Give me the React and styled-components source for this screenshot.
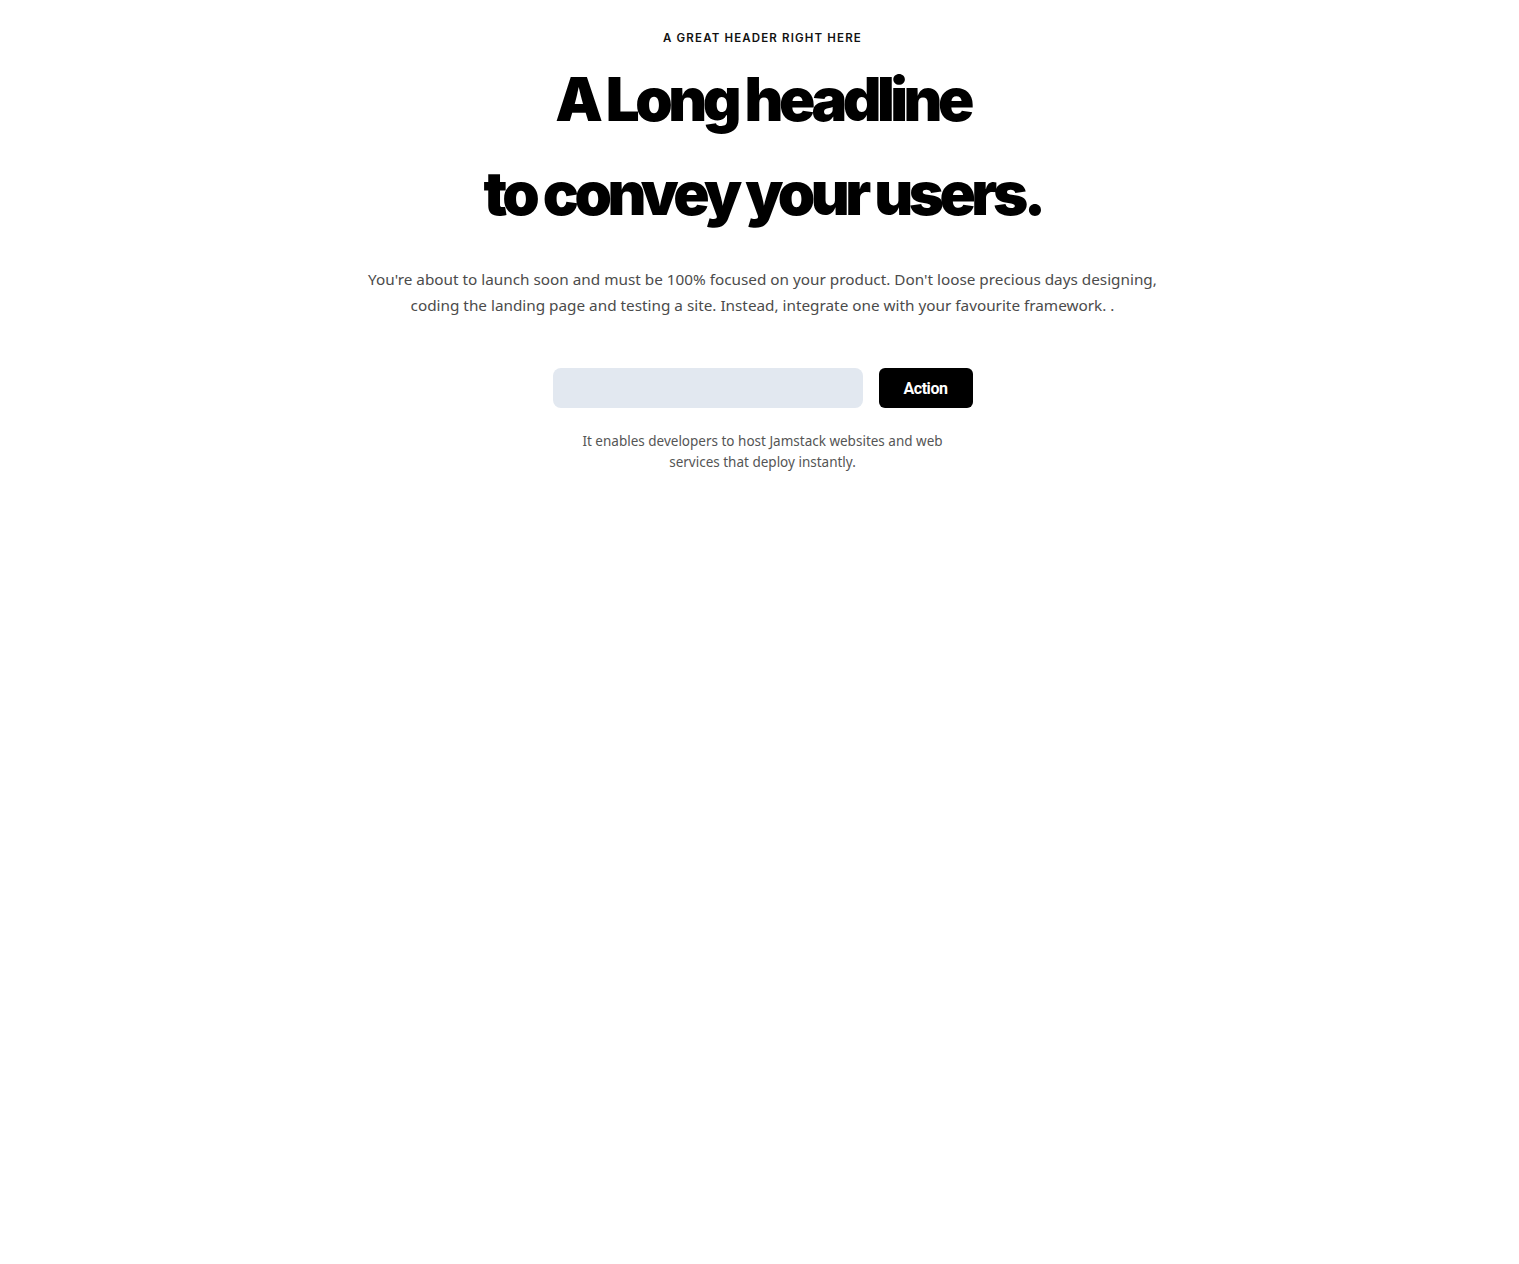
import React from 'react';
import styled, { createGlobalStyle } from 'styled-components';

const GlobalStyle = createGlobalStyle`
  * { box-sizing: border-box; }
  body {
    margin: 0;
    background: #ffffff;
    font-family: "Noto Sans", "Open Sans", sans-serif;
  }
`;

const Page = styled.section`
  display: flex;
  flex-direction: column;
  align-items: center;
  padding: 30px 16px 0 22px;
  text-align: center;
`;

const Eyebrow = styled.p`
  margin: 0;
  font-family: Inter, "Liberation Sans", sans-serif;
  font-size: 11.5px;
  font-weight: 600;
  letter-spacing: 0.1em;
  line-height: 16px;
  color: #111111;
  text-transform: uppercase;
`;

const Headline = styled.h1`
  margin: 6px 0 0;
  font-family: Inter, "Liberation Sans", sans-serif;
  font-size: 60px;
  font-weight: 900;
  letter-spacing: -0.075em;
  line-height: 94px;
  color: #000000;
`;

const Lead = styled.p`
  margin: 26px 0 0;
  max-width: 800px;
  font-size: 15.3px;
  line-height: 26px;
  color: #4b4b4b;
`;

const Form = styled.form`
  display: flex;
  gap: 16px;
  margin-top: 50px;
`;

const Field = styled.input`
  width: 310px;
  height: 40px;
  border: none;
  border-radius: 8px;
  background: #e2e8f0;
  padding: 0 14px;
  font-size: 15px;
  outline: none;
`;

const Button = styled.button`
  width: 94px;
  height: 40px;
  border: none;
  border-radius: 6px;
  background: #000000;
  color: #ffffff;
  font-family: Roboto, "Liberation Sans", sans-serif;
  font-size: 16px;
  font-weight: 700;
  letter-spacing: -0.03em;
  cursor: pointer;
`;

const Note = styled.p`
  margin: 23px 0 0;
  max-width: 384px;
  font-size: 13.5px;
  line-height: 21px;
  color: #555555;
`;

export default function App() {
  return (
    <>
      <GlobalStyle />
      <Page>
        <Eyebrow>A great header right here</Eyebrow>
        <Headline>
          A Long headline
          <br />
          to convey your users.
        </Headline>
        <Lead>
          You're about to launch soon and must be 100% focused on your product. Don't loose precious days designing,
          coding the landing page and testing a site. Instead, integrate one with your favourite framework. .
        </Lead>
        <Form onSubmit={e => e.preventDefault()}>
          <Field type="email" aria-label="Email" />
          <Button type="submit">Action</Button>
        </Form>
        <Note>It enables developers to host Jamstack websites and web services that deploy instantly.</Note>
      </Page>
    </>
  );
}
